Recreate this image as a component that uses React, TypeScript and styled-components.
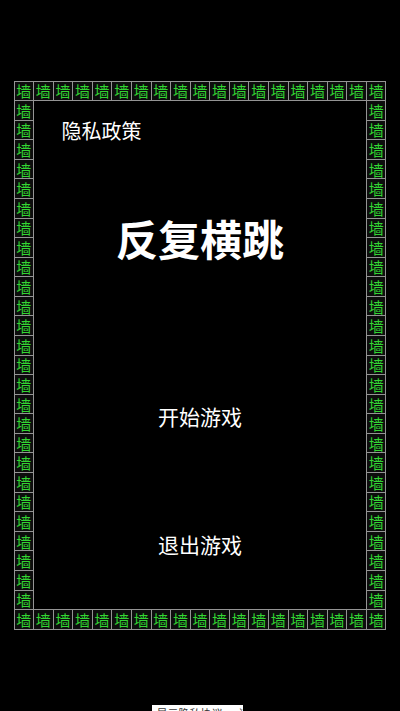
import React from "react";
import styled, { createGlobalStyle } from "styled-components";

const GlobalStyle = createGlobalStyle`
  html, body {
    margin: 0;
    padding: 0;
    background: #000;
    overflow: hidden;
  }
  body {
    font-family: "Noto Sans CJK SC", "Noto Sans", sans-serif;
  }
`;

const COLS = 19;
const ROWS = 28;
const CELL = 372 / COLS;

const Page = styled.div`
  width: 400px;
  height: 711px;
  background: #000;
  display: flex;
  flex-direction: column;
  align-items: center;
  padding-top: 81px;
  box-sizing: border-box;
  overflow: hidden;
`;

const Board = styled.div`
  width: ${CELL * COLS}px;
  display: grid;
  grid-template-columns: repeat(${COLS}, ${CELL}px);
  grid-template-rows: repeat(${ROWS}, ${CELL}px);
`;

const Wall = styled.div`
  box-sizing: border-box;
  border: 1px solid #949494;
  margin: -0.5px;
  background: #0d0d0d;
  color: #33d633;
  font-size: 15px;
  line-height: 1;
  display: flex;
  align-items: center;
  justify-content: center;
`;

const Field = styled.div`
  grid-column: 2 / ${COLS};
  grid-row: 2 / ${ROWS};
  display: flex;
  flex-direction: column;
  align-items: center;
  color: #fff;
`;

const PrivacyLink = styled.div`
  align-self: flex-start;
  margin: 18px 0 0 28px;
  font-size: 20px;
  line-height: 24px;
`;

const Title = styled.h1`
  margin: 70px 0 0;
  font-size: 42px;
  line-height: 50px;
  font-weight: 700;
  letter-spacing: 0;
`;

const MenuButton = styled.div<{ $gap: number }>`
  margin-top: ${(p) => p.$gap}px;
  font-size: 21px;
  line-height: 26px;
`;

const Footer = styled.div`
  margin-top: 76px;
  margin-left: -6px;
  width: 91px;
  height: 20px;
  background: #fff;
  color: #333;
  font-size: 11px;
  line-height: 14px;
  padding: 1px 0 0 5px;
  box-sizing: border-box;
  white-space: nowrap;
  overflow: hidden;
`;

function isBorder(r: number, c: number) {
  return r === 0 || r === ROWS - 1 || c === 0 || c === COLS - 1;
}

export default function App() {
  const cells: React.ReactNode[] = [];
  for (let r = 0; r < ROWS; r++) {
    for (let c = 0; c < COLS; c++) {
      if (isBorder(r, c)) {
        cells.push(
          <Wall key={`${r}-${c}`} style={{ gridRow: r + 1, gridColumn: c + 1 }}>
            墙
          </Wall>
        );
      }
    }
  }
  return (
    <>
      <GlobalStyle />
      <Page>
        <Board>
          {cells}
          <Field>
            <PrivacyLink>隐私政策</PrivacyLink>
            <Title>反复横跳</Title>
            <MenuButton $gap={140}>开始游戏</MenuButton>
            <MenuButton $gap={102}>退出游戏</MenuButton>
          </Field>
        </Board>
        <Footer>显示隐私协议 · 订阅者</Footer>
      </Page>
    </>
  );
}
